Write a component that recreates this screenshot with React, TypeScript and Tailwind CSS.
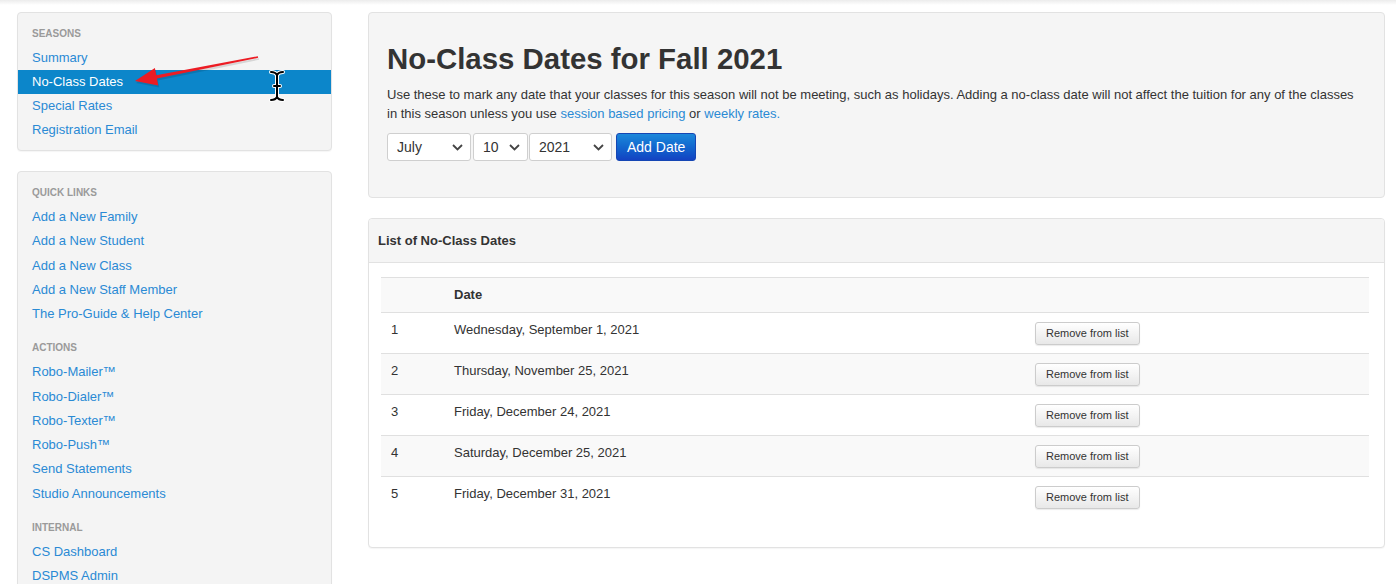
import type { ReactNode } from 'react';

const seasonLinks = ['Summary', 'No-Class Dates', 'Special Rates', 'Registration Email'];

const sideGroups: { title: string; links: string[] }[] = [
  {
    title: 'Quick Links',
    links: ['Add a New Family', 'Add a New Student', 'Add a New Class', 'Add a New Staff Member', 'The Pro-Guide & Help Center'],
  },
  {
    title: 'Actions',
    links: ['Robo-Mailer™', 'Robo-Dialer™', 'Robo-Texter™', 'Robo-Push™', 'Send Statements', 'Studio Announcements'],
  },
  {
    title: 'Internal',
    links: ['CS Dashboard', 'DSPMS Admin', 'Studio Settings'],
  },
];

const noClassDates = [
  'Wednesday, September 1, 2021',
  'Thursday, November 25, 2021',
  'Friday, December 24, 2021',
  'Saturday, December 25, 2021',
  'Friday, December 31, 2021',
];

function SideTitle({ children }: { children: ReactNode }) {
  return <div className="px-[14px] text-[10px] leading-[14px] font-bold uppercase text-[#9a9a9a] mb-[5px]">{children}</div>;
}

function Chevron() {
  return (
    <svg className="pointer-events-none absolute right-[8px] top-[11px]" width="11" height="7" viewBox="0 0 11 7" fill="none">
      <path d="M1 1l4.5 4.5L10 1" stroke="#444" strokeWidth="1.8" />
    </svg>
  );
}

function Select({ value, options, width }: { value: string; options: string[]; width: string }) {
  return (
    <div className={`relative ${width}`}>
      <select
        defaultValue={value}
        className="appearance-none w-full h-[28px] bg-white border border-[#cfcfcf] rounded-[3px] pl-[9px] text-[14px] text-[#333] outline-none"
      >
        {options.map((o) => (
          <option key={o}>{o}</option>
        ))}
      </select>
      <Chevron />
    </div>
  );
}

export default function App() {
  return (
    <div className="relative min-h-screen bg-white font-['Liberation_Sans',Arial,sans-serif] text-[#333]">
      <div className="h-[5px] bg-linear-to-b from-[#ececec] to-white" />
      <div className="flex items-start pl-[17px] pr-[11px] pt-[7px]">
        {/* sidebar */}
        <aside className="w-[315px] shrink-0 flex flex-col gap-[20px]">
          <div className="bg-[#f4f4f4] border border-[#e2e2e2] rounded-[4px] pt-[14px] pb-[8px] shadow-[0_1px_1px_rgba(0,0,0,0.04)]">
            <SideTitle>Seasons</SideTitle>
            {seasonLinks.map((l) =>
              l === 'No-Class Dates' ? (
                <div key={l} className="px-[14px] text-[13px] leading-[24px] bg-[#0c86ca] text-white">
                  {l}
                </div>
              ) : (
                <a key={l} href="#" className="block px-[14px] text-[13px] leading-[24px] text-[#2a8ad4]">
                  {l}
                </a>
              ),
            )}
          </div>

          <div className="bg-[#f4f4f4] border border-[#e2e2e2] rounded-[4px] pt-[14px] pb-[30px] shadow-[0_1px_1px_rgba(0,0,0,0.04)]">
            {sideGroups.map((g, i) => (
              <div key={g.title} className={i > 0 ? 'mt-[15px]' : ''}>
                <SideTitle>{g.title}</SideTitle>
                {g.links.map((l) => (
                  <a key={l} href="#" className="block px-[14px] text-[13px] leading-[24.25px] text-[#2a8ad4]">
                    {l}
                  </a>
                ))}
              </div>
            ))}
          </div>
        </aside>

        {/* main */}
        <main className="ml-[36px] flex-1 flex flex-col gap-[20px]">
          <section className="bg-[#f5f5f5] border border-[#e2e2e2] rounded-[4px] pl-[18px] pr-[18px] pt-[29px] pb-[36px]">
            <h1 className="text-[29.4px] leading-[33px] font-bold text-[#333]">No-Class Dates for Fall 2021</h1>
            <p className="mt-[10px] text-[13px] leading-[19px] text-[#333]">
              Use these to mark any date that your classes for this season will not be meeting, such as holidays. Adding a no-class date
              will not affect the tuition for any of the classes in this season unless you use{' '}
              <a href="#" className="text-[#2a8ad4]">
                session based pricing
              </a>{' '}
              or{' '}
              <a href="#" className="text-[#2a8ad4]">
                weekly rates.
              </a>
            </p>
            <div className="mt-[10px] flex items-center">
              <Select
                value="July"
                width="w-[84px]"
                options={['January', 'February', 'March', 'April', 'May', 'June', 'July', 'August', 'September', 'October', 'November', 'December']}
              />
              <div className="ml-[2px]">
                <Select value="10" width="w-[55px]" options={Array.from({ length: 31 }, (_, i) => String(i + 1))} />
              </div>
              <div className="ml-[1px]">
                <Select value="2021" width="w-[83px]" options={['2020', '2021', '2022']} />
              </div>
              <button className="ml-[4px] h-[28px] px-[10px] rounded-[3px] border border-[#1546b4] bg-linear-to-b from-[#1d88da] to-[#1442c2] text-white text-[14px]">
                Add Date
              </button>
            </div>
          </section>

          <section className="bg-white border border-[#e2e2e2] rounded-[4px] shadow-[0_1px_1px_rgba(0,0,0,0.04)]">
            <div className="h-[44px] flex items-center px-[9px] bg-[#f5f5f5] border-b border-[#e2e2e2] rounded-t-[4px] text-[13px] font-bold">
              List of No-Class Dates
            </div>
            <div className="pt-[14px] pl-[12px] pr-[15px] pb-[10px]">
              <table className="w-full border-collapse mb-[20px] text-[13px]">
                <thead>
                  <tr className="bg-[#f9f9f9]">
                    <th className="w-[63px] border-t border-[#e0e0e0] px-[10px] py-[8px] leading-[18px] text-left font-bold" />
                    <th className="w-[581px] border-t border-[#e0e0e0] px-[10px] py-[8px] leading-[18px] text-left font-bold">Date</th>
                    <th className="border-t border-[#e0e0e0] px-[10px] py-[8px] leading-[18px] text-left font-bold" />
                  </tr>
                </thead>
                <tbody>
                  {noClassDates.map((d, i) => (
                    <tr key={d} className={i % 2 === 1 ? 'bg-[#f9f9f9]' : 'bg-white'}>
                      <td className="border-t border-[#e0e0e0] px-[10px] py-[8px] leading-[18px] align-top">{i + 1}</td>
                      <td className="border-t border-[#e0e0e0] px-[10px] py-[8px] leading-[18px] align-top">{d}</td>
                      <td className="border-t border-[#e0e0e0] px-[10px] py-[8px] align-top">
                        <button className="mt-[1px] block h-[23px] px-[10px] rounded-[3px] border border-[#cccccc] bg-linear-to-b from-white to-[#e8e8e8] text-[11px] text-[#333] shadow-[0_1px_1px_rgba(0,0,0,0.08)]">
                          Remove from list
                        </button>
                      </td>
                    </tr>
                  ))}
                </tbody>
              </table>
            </div>
          </section>
        </main>
      </div>

      {/* annotation arrow and text cursor lying over the sidebar */}
      <svg className="pointer-events-none absolute left-0 top-0" width="320" height="110" viewBox="0 0 320 110">
        <polygon points="135,81 154.9,68 156.3,75.2 257.85,56.2 258.15,57.8 156.9,78.4 158.3,85.6" fill="#000" opacity="0.12" transform="translate(1,2)" />
        <polygon points="135,81 154.9,68 156.3,75.2 257.85,56.2 258.15,57.8 156.9,78.4 158.3,85.6" fill="#ec1c24" />
        <g fill="none" strokeLinecap="round">
          <path d="M271 72c3 0 5 1 6 3 1-2 3-3 6-3M277 75v23M271 100c3 0 5-1 6-3 1 2 3 3 6 3M274 86h6" stroke="#fff" strokeWidth="4" />
          <path d="M271 72c3 0 5 1 6 3 1-2 3-3 6-3M277 75v23M271 100c3 0 5-1 6-3 1 2 3 3 6 3M274 86h6" stroke="#000" strokeWidth="2" />
        </g>
      </svg>
    </div>
  );
}
